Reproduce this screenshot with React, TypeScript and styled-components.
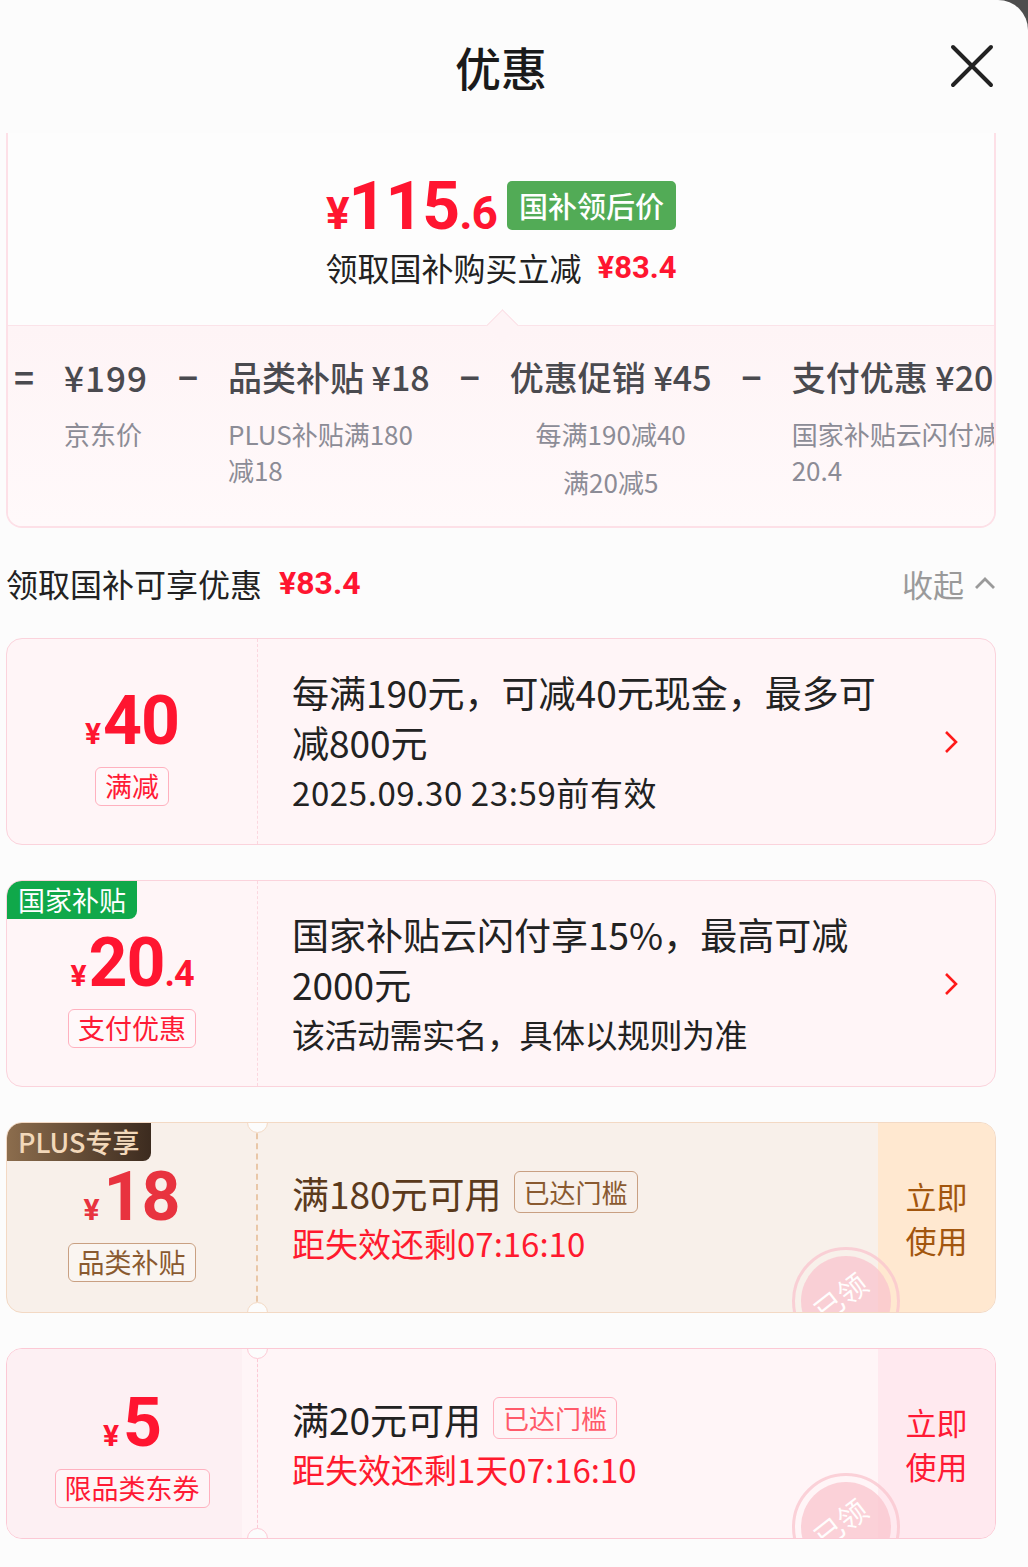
import React from "react";
import styled, { createGlobalStyle } from "styled-components";

const Global = createGlobalStyle`
  html, body { margin: 0; padding: 0; background: #4d4d4d; }
  body { font-family: "Noto Sans CJK SC", "Noto Sans", sans-serif; }
  * { box-sizing: border-box; }
`;

const NUM = `"Roboto", "Liberation Sans", "Noto Sans CJK SC", sans-serif`;

type Tone = "red" | "plus" | "pink";
const tones: Record<Tone, {
  bg: string; border: string; divider: string; title: string; tagBorder: string;
  tagText: string; amount: string; btnBg: string; btnText: string; thText: string; thBorder: string;
}> = {
  red: { bg: "#fff5f7", border: "#fbd3dc", divider: "#fbd7df", title: "#222", tagBorder: "#ffb1bf", tagText: "#ff1a35", amount: "#ff1530", btnBg: "transparent", btnText: "#ff1a35", thText: "#ff5a6a", thBorder: "#ffb1bf" },
  plus: { bg: "#f8f0ea", border: "#f3d9c4", divider: "#e9c7a8", title: "#5b3a1c", tagBorder: "#c9a082", tagText: "#8a5a30", amount: "#e8333f", btnBg: "#ffe8d0", btnText: "#a2560e", thText: "#8a5a30", thBorder: "#c9a082" },
  pink: { bg: "#fff5f7", border: "#fcc9d5", divider: "#fcc9d5", title: "#222", tagBorder: "#ffb1bf", tagText: "#ff1a35", amount: "#ff1530", btnBg: "#ffe9ef", btnText: "#ff1a35", thText: "#ff5a6a", thBorder: "#ffb1bf" },
};

const Sheet = styled.div`
  width: 1028px;
  min-height: 1567px;
  background: #fcfcfc;
  border-top-right-radius: 30px;
  overflow: hidden;
`;

const Inner = styled.div`
  width: 990px;
  margin-left: 6px;
`;

const Header = styled.header`
  height: 133px;
  display: grid;
  grid-template-columns: 1fr auto 1fr;
  align-items: center;
  padding-bottom: 2px;
`;

const Title = styled.h1`
  grid-column: 2;
  margin: 0;
  font-size: 46px;
  font-weight: 500;
  color: #1a1a1a;
  line-height: 1;
`;

const Close = styled.button`
  grid-column: 3;
  justify-self: end;
  margin-right: 0;
  width: 48px;
  height: 48px;
  padding: 0;
  border: 0;
  background: none;
  display: flex;
  align-items: center;
  justify-content: center;
`;

const Summary = styled.section`
  border: 2px solid #fde0e7;
  border-top: none;
  border-radius: 0 0 16px 16px;
  overflow: hidden;
`;

const SummaryTop = styled.div`
  height: 192px;
  padding-top: 43px;
  display: flex;
  flex-direction: column;
  align-items: center;
  background: #fdfdfd;
`;

const PriceRow = styled.div`
  height: 58px;
  display: flex;
  align-items: center;
  gap: 10px;
`;

const BigPrice = styled.span`
  font-family: ${NUM};
  font-weight: 700;
  color: #ff1530;
  display: flex;
  align-items: baseline;
  line-height: 1;
  letter-spacing: -1px;
  margin-top: 4px;
`;

const PriceSym = styled.span<{ $size: number }>`
  font-size: ${(p) => p.$size}px;
`;

const GreenTag = styled.span`
  height: 49px;
  padding: 0 12px;
  border-radius: 5px;
  background: #52ab56;
  color: #fff;
  font-size: 29px;
  line-height: 49px;
  font-weight: 500;
`;

const SubRow = styled.div`
  margin-top: 13px;
  height: 40px;
  display: flex;
  align-items: center;
  gap: 16px;
  font-size: 32px;
  color: #222;
`;

const RedNum = styled.span<{ $size?: number }>`
  font-family: ${NUM};
  font-weight: 700;
  color: #ff1530;
  font-size: ${(p) => p.$size ?? 30}px;
`;

const Breakdown = styled.div`
  position: relative;
  height: 201px;
  border-top: 1px solid #fbe3e9;
  background: linear-gradient(#fef4f6, #fff9fa);
  &::before {
    content: "";
    position: absolute;
    left: 483px;
    top: -12px;
    width: 22px;
    height: 22px;
    background: #fef4f6;
    border-left: 1px solid #fbe0e6;
    border-top: 1px solid #fbe0e6;
    transform: rotate(45deg);
  }
`;

const BreakRow = styled.div`
  display: flex;
  align-items: flex-start;
  padding: 29px 0 0 6px;
  gap: 30px;
  white-space: nowrap;
`;

const Op = styled.span`
  font-size: 34px;
  line-height: 44px;
  font-weight: 700;
  color: #4a4a4f;
  flex: none;
`;

const BreakCol = styled.div<{ $center?: boolean }>`
  flex: none;
  display: flex;
  flex-direction: column;
  align-items: ${(p) => (p.$center ? "center" : "flex-start")};
`;

const BreakHead = styled.span<{ $wide?: boolean }>`
  font-size: ${(p) => (p.$wide ? 35 : 34)}px;
  line-height: 44px;
  font-weight: 500;
  color: #4a4a4f;
  letter-spacing: ${(p) => (p.$wide ? "1px" : "0")};
`;

const BreakNote = styled.span<{ $gap?: number }>`
  font-size: 26px;
  line-height: 36px;
  color: #8c8c96;
  margin-top: ${(p) => p.$gap ?? 0}px;
`;

const SectionHead = styled.div`
  height: 110px;
  display: flex;
  align-items: center;
  justify-content: space-between;
`;

const SectionTitle = styled.div`
  display: flex;
  align-items: center;
  gap: 17px;
  font-size: 32px;
  color: #222;
`;

const Collapse = styled.div`
  display: flex;
  align-items: center;
  gap: 10px;
  font-size: 31px;
  color: #9a9a9a;
`;

const List = styled.div`
  display: flex;
  flex-direction: column;
  gap: 35px;
`;

const Coupon = styled.div<{ $tone: Tone; $h: number }>`
  position: relative;
  height: ${(p) => p.$h}px;
  border: 1.5px solid ${(p) => tones[p.$tone].border};
  background: ${(p) => tones[p.$tone].bg};
  border-radius: 16px;
  display: grid;
  grid-template-columns: 251px 1fr auto;
  overflow: hidden;
`;

const Left = styled.div<{ $tone: Tone; $shade?: boolean }>`
  border-right: ${(p) => (p.$tone === "plus" ? "2px" : "1.5px")} dashed ${(p) => tones[p.$tone].divider};
  display: flex;
  flex-direction: column;
  align-items: center;
  justify-content: center;
  padding-top: 6px;
  ${(p) => (p.$shade ? "background: linear-gradient(90deg, #fdf0f3 94%, #fff5f7 94%);" : "")}
`;

const Amount = styled.div<{ $tone: Tone }>`
  font-family: ${NUM};
  font-weight: 700;
  color: ${(p) => tones[p.$tone].amount};
  display: flex;
  align-items: baseline;
  line-height: 1;
  letter-spacing: -1px;
  height: 72px;
  padding-top: 4px;
`;

const AmtPart = styled.span<{ $size: number; $mr?: number }>`
  font-size: ${(p) => p.$size}px;
  margin-right: ${(p) => p.$mr ?? 0}px;
`;

const KindTag = styled.span<{ $tone: Tone }>`
  margin-top: 12px;
  height: 39px;
  padding: 0 9px;
  border: 1.5px solid ${(p) => tones[p.$tone].tagBorder};
  border-radius: 6px;
  color: ${(p) => tones[p.$tone].tagText};
  font-size: 27px;
  line-height: 36px;
  background: rgba(255, 255, 255, 0.35);
`;

const Right = styled.div`
  padding-left: 34px;
  display: flex;
  flex-direction: column;
  justify-content: center;
  min-width: 0;
`;

const Desc = styled.div`
  width: 600px;
  font-size: 37px;
  line-height: 50px;
  color: #222;
`;

const Note = styled.div<{ $spacing?: number }>`
  font-size: 33px;
  line-height: 50px;
  color: #222;
  letter-spacing: ${(p) => p.$spacing ?? 0}px;
`;

const CondRow = styled.div<{ $tone: Tone }>`
  display: flex;
  align-items: center;
  gap: 12px;
  height: 50px;
  font-size: 37px;
  color: ${(p) => tones[p.$tone].title};
`;

const Threshold = styled.span<{ $tone: Tone }>`
  height: 42px;
  padding: 0 9px;
  border: 1.5px solid ${(p) => tones[p.$tone].thBorder};
  border-radius: 6px;
  font-size: 26px;
  line-height: 39px;
  color: ${(p) => tones[p.$tone].thText};
  margin-top: -2px;
`;

const Countdown = styled.div`
  font-size: 33px;
  line-height: 50px;
  color: #ff1a2e;
`;

const Chevron = styled.div`
  width: 82px;
  display: flex;
  align-items: center;
  justify-content: center;
  padding-right: 6px;
`;

const UseBtn = styled.div<{ $tone: Tone }>`
  width: 117px;
  background: ${(p) => tones[p.$tone].btnBg};
  color: ${(p) => tones[p.$tone].btnText};
  font-size: 31px;
  line-height: 44px;
  display: flex;
  align-items: center;
  justify-content: center;
  text-align: center;
  padding-top: 0;
  z-index: 0;
`;

const CornerTag = styled.div<{ $kind: "green" | "plus" }>`
  position: absolute;
  left: 0;
  top: 0;
  height: 38px;
  padding: 0 11px;
  border-radius: 14px 0 8px 0;
  font-size: 27px;
  line-height: 38px;
  background: ${(p) => (p.$kind === "green" ? "#10a84a" : "linear-gradient(90deg, #8c6d4d, #3c2b1f)")};
  color: ${(p) => (p.$kind === "green" ? "#fff" : "#f2d8ba")};
  font-weight: ${(p) => (p.$kind === "green" ? 400 : 500)};
`;

const Notch = styled.span<{ $pos: "top" | "bottom" }>`
  position: absolute;
  left: 240px;
  ${(p) => (p.$pos === "top" ? "top: -11px;" : "bottom: -11px;")}
  width: 21px;
  height: 21px;
  border-radius: 50%;
  background: #fcfcfc;
  border: 1.5px solid var(--nb);
  z-index: 2;
`;

const Stamp = styled.div`
  position: absolute;
  left: 785px;
  top: var(--st);
  width: 108px;
  height: 108px;
  border-radius: 50%;
  border: 3px solid rgba(249, 196, 206, 0.75);
  display: flex;
  align-items: center;
  justify-content: center;
  z-index: 1;
  &::before {
    content: "";
    position: absolute;
    inset: 6px;
    border-radius: 50%;
    background: rgba(249, 196, 206, 0.75);
  }
`;

const StampText = styled.span`
  position: relative;
  color: #fff;
  font-size: 29px;
  transform: rotate(-38deg) translate(-2px, -8px);
  opacity: 0.95;
`;

const ArrowRight = () => (
  <svg width="14" height="24" viewBox="0 0 14 24">
    <path d="M2 2 L12 12 L2 22" fill="none" stroke="#ff1a1a" strokeWidth="2.6" />
  </svg>
);

const LeftBlock: React.FC<{ tone: Tone; amount: React.ReactNode; tag: string; shade?: boolean }> = ({ tone, amount, tag, shade }) => (
  <Left $tone={tone} $shade={shade}>
    <Amount $tone={tone}>{amount}</Amount>
    <KindTag $tone={tone}>{tag}</KindTag>
  </Left>
);

export default function App() {
  return (
    <Sheet>
      <Global />
      <Inner>
        <Header>
          <Title>优惠</Title>
          <Close aria-label="close">
            <svg width="44" height="44" viewBox="0 0 44 44">
              <path d="M3 3 L41 41 M41 3 L3 41" stroke="#222" strokeWidth="4" strokeLinecap="round" />
            </svg>
          </Close>
        </Header>

        <Summary>
          <SummaryTop>
            <PriceRow>
              <BigPrice>
                <PriceSym $size={44}>¥</PriceSym>
                <PriceSym $size={66}>115</PriceSym>
                <PriceSym $size={46}>.6</PriceSym>
              </BigPrice>
              <GreenTag>国补领后价</GreenTag>
            </PriceRow>
            <SubRow>
              领取国补购买立减
              <RedNum $size={31}>¥83.4</RedNum>
            </SubRow>
          </SummaryTop>
          <Breakdown>
            <BreakRow>
              <Op>=</Op>
              <BreakCol>
                <BreakHead $wide>¥199</BreakHead>
                <BreakNote $gap={17}>京东价</BreakNote>
              </BreakCol>
              <Op>−</Op>
              <BreakCol>
                <BreakHead>品类补贴 ¥18</BreakHead>
                <BreakNote $gap={17}>PLUS补贴满180</BreakNote>
                <BreakNote>减18</BreakNote>
              </BreakCol>
              <Op>−</Op>
              <BreakCol $center>
                <BreakHead>优惠促销 ¥45</BreakHead>
                <BreakNote $gap={17}>每满190减40</BreakNote>
                <BreakNote $gap={12}>满20减5</BreakNote>
              </BreakCol>
              <Op>−</Op>
              <BreakCol>
                <BreakHead>支付优惠 ¥20.4</BreakHead>
                <BreakNote $gap={17}>国家补贴云闪付减</BreakNote>
                <BreakNote>20.4</BreakNote>
              </BreakCol>
            </BreakRow>
          </Breakdown>
        </Summary>

        <SectionHead>
          <SectionTitle>
            领取国补可享优惠
            <RedNum $size={32}>¥83.4</RedNum>
          </SectionTitle>
          <Collapse>
            收起
            <svg width="22" height="14" viewBox="0 0 22 14">
              <path d="M2 12 L11 3 L20 12" fill="none" stroke="#9a9a9a" strokeWidth="2.8" />
            </svg>
          </Collapse>
        </SectionHead>

        <List>
          <Coupon $tone="red" $h={207}>
            <LeftBlock
              tone="red"
              tag="满减"
              amount={<><AmtPart $size={30} $mr={3}>¥</AmtPart><AmtPart $size={68}>40</AmtPart></>}
            />
            <Right>
              <Desc>每满190元，可减40元现金，最多可减800元</Desc>
              <Note $spacing={0.6}>2025.09.30 23:59前有效</Note>
            </Right>
            <Chevron><ArrowRight /></Chevron>
          </Coupon>

          <Coupon $tone="red" $h={207}>
            <CornerTag $kind="green">国家补贴</CornerTag>
            <LeftBlock
              tone="red"
              tag="支付优惠"
              amount={<><AmtPart $size={30} $mr={3}>¥</AmtPart><AmtPart $size={68}>20</AmtPart><AmtPart $size={36}>.4</AmtPart></>}
            />
            <Right>
              <Desc>国家补贴云闪付享15%，最高可减2000元</Desc>
              <Note $spacing={-0.5}>该活动需实名，具体以规则为准</Note>
            </Right>
            <Chevron><ArrowRight /></Chevron>
          </Coupon>

          <Coupon $tone="plus" $h={191} style={{ ["--nb" as string]: "#f3d9c4", ["--st" as string]: "124px" } as React.CSSProperties}>
            <CornerTag $kind="plus">PLUS专享</CornerTag>
            <Notch $pos="top" />
            <Notch $pos="bottom" />
            <LeftBlock
              tone="plus"
              tag="品类补贴"
              amount={<><AmtPart $size={30} $mr={5}>¥</AmtPart><AmtPart $size={68}>18</AmtPart></>}
            />
            <Right>
              <CondRow $tone="plus">
                满180元可用
                <Threshold $tone="plus">已达门槛</Threshold>
              </CondRow>
              <Countdown>距失效还剩07:16:10</Countdown>
            </Right>
            <UseBtn $tone="plus">立即<br />使用</UseBtn>
            <Stamp><StampText>已领</StampText></Stamp>
          </Coupon>

          <Coupon $tone="pink" $h={191} style={{ ["--nb" as string]: "#fcc9d5", ["--st" as string]: "124px" } as React.CSSProperties}>
            <Notch $pos="top" />
            <Notch $pos="bottom" />
            <LeftBlock
              tone="pink"
              tag="限品类东券"
              shade
              amount={<><AmtPart $size={30} $mr={5}>¥</AmtPart><AmtPart $size={68}>5</AmtPart></>}
            />
            <Right>
              <CondRow $tone="pink">
                满20元可用
                <Threshold $tone="pink">已达门槛</Threshold>
              </CondRow>
              <Countdown>距失效还剩1天07:16:10</Countdown>
            </Right>
            <UseBtn $tone="pink">立即<br />使用</UseBtn>
            <Stamp><StampText>已领</StampText></Stamp>
          </Coupon>
        </List>
      </Inner>
    </Sheet>
  );
}
